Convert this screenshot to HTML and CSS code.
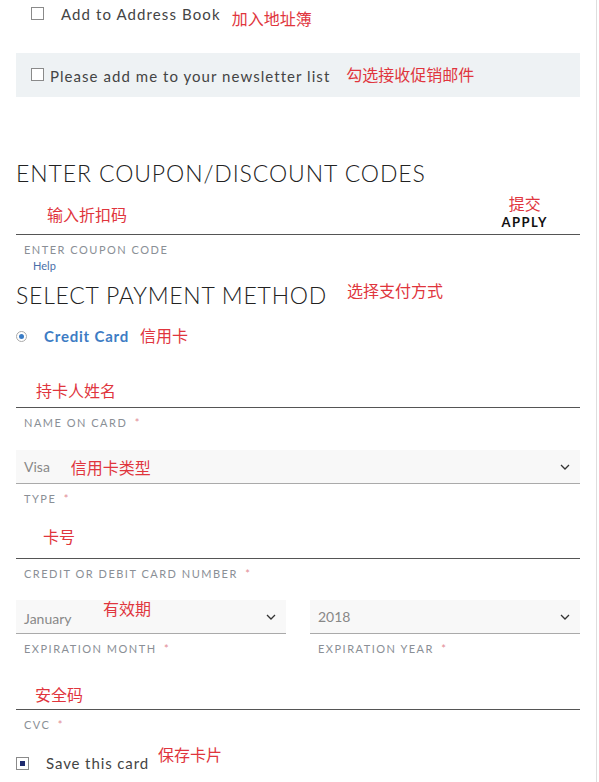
FILE: index.html
```html
<!DOCTYPE html>
<html lang="zh">
<head>
<meta charset="utf-8">
<link rel="stylesheet" href="styles.css">
</head>
<body>
<div class="page">
  <div class="row-address">
    <span class="cb"></span>
    <span class="cb-label">Add to Address Book</span>
    <span class="note note-address">加入地址簿</span>
  </div>

  <div class="newsletter">
    <span class="cb"></span>
    <span class="nl-label">Please add me to your newsletter list</span>
    <span class="note note-nl">勾选接收促销邮件</span>
  </div>

  <h2 class="heading h-coupon">ENTER COUPON/DISCOUNT CODES</h2>

  <div class="coupon-field">
    <span class="note note-coupon">输入折扣码</span>
    <div class="apply">
      <span class="note note-apply">提交</span>
      <span class="apply-btn">APPLY</span>
    </div>
  </div>
  <div class="label lbl-coupon">ENTER COUPON CODE</div>
  <div class="help">Help</div>

  <div class="pay-head">
    <h2 class="heading h-pay">SELECT PAYMENT METHOD</h2>
    <span class="note note-pay">选择支付方式</span>
  </div>

  <div class="radio-row">
    <span class="radio"><span class="dot"></span></span>
    <span class="radio-label">Credit Card</span>
    <span class="note note-cc">信用卡</span>
  </div>

  <div class="text-field f-name"><span class="note note-name">持卡人姓名</span></div>
  <div class="label">NAME ON CARD <span class="star">*</span></div>

  <div class="select f-type">
    <span class="sel-val">Visa</span>
    <span class="note note-type">信用卡类型</span>
    <svg class="chev" width="10" height="6" viewBox="0 0 10 6"><polyline points="1,1 5,5 9,1" fill="none" stroke="#333" stroke-width="1.3"/></svg>
  </div>
  <div class="label">TYPE <span class="star">*</span></div>

  <div class="text-field f-num"><span class="note note-num">卡号</span></div>
  <div class="label">CREDIT OR DEBIT CARD NUMBER <span class="star">*</span></div>

  <div class="exp">
    <div class="exp-col">
      <div class="select f-month">
        <span class="sel-val">January</span>
        <span class="note note-exp">有效期</span>
        <svg class="chev" width="10" height="6" viewBox="0 0 10 6"><polyline points="1,1 5,5 9,1" fill="none" stroke="#333" stroke-width="1.3"/></svg>
      </div>
      <div class="label">EXPIRATION MONTH <span class="star">*</span></div>
    </div>
    <div class="exp-col">
      <div class="select f-year">
        <span class="sel-val">2018</span>
        <svg class="chev" width="10" height="6" viewBox="0 0 10 6"><polyline points="1,1 5,5 9,1" fill="none" stroke="#333" stroke-width="1.3"/></svg>
      </div>
      <div class="label">EXPIRATION YEAR <span class="star">*</span></div>
    </div>
  </div>

  <div class="text-field f-cvc"><span class="note note-cvc">安全码</span></div>
  <div class="label">CVC <span class="star">*</span></div>

  <div class="save-row">
    <span class="cb cb-checked"><span class="inner"></span></span>
    <span class="save-label">Save this card</span>
    <span class="note note-save">保存卡片</span>
  </div>
</div>
</body>
</html>
```

FILE: styles.css
```css
html, body {
  margin: 0;
  padding: 0;
  background: #fff;
}
body {
  font-family: "Lato", "Open Sans", "Noto Sans CJK SC", sans-serif;
  color: #333;
}
.page {
  width: 564px;
  height: 782px;
  padding: 0 16px;
  border-right: 1px solid #dedede;
  overflow: hidden;
}
.note {
  font-family: "Noto Sans CJK SC", sans-serif;
  color: #e0353d;
  font-size: 16px;
  line-height: 18px;
  letter-spacing: 0;
}
.cb {
  display: inline-block;
  width: 11px;
  height: 11px;
  border: 1px solid #8a8a8a;
  background: #fff;
  flex: none;
}
.row-address {
  display: flex;
  align-items: flex-start;
  padding: 7px 0 0 15px;
  height: 46px;
}
.cb-label {
  margin-left: 17px;
  font-size: 15px;
  line-height: 15px;
  letter-spacing: 1.1px;
  color: #444;
}
.note-address {
  margin-left: 11px;
  margin-top: 2px;
}
.newsletter {
  display: flex;
  align-items: center;
  height: 44px;
  background: #eef2f4;
  padding-left: 15px;
}
.newsletter .cb { margin-top: -2px; }
.nl-label {
  margin-left: 6px;
  font-size: 15px;
  letter-spacing: 1.05px;
  color: #444;
  margin-top: 2px;
}
.note-nl {
  margin-left: 16px;
  margin-top: -3px;
}
.heading {
  margin: 0;
  font-weight: 300;
  color: #222;
}
.h-coupon {
  margin-top: 62px;
  font-size: 23px;
  line-height: 28px;
  letter-spacing: 0.9px;
}
.coupon-field {
  display: flex;
  justify-content: space-between;
  align-items: flex-start;
  height: 45px;
  border-bottom: 1px solid #555;
  margin-top: 2px;
}
.note-coupon {
  margin-left: 31px;
  margin-top: 16px;
}
.apply {
  display: flex;
  flex-direction: column;
  align-items: center;
  margin-right: 32px;
  margin-top: 5px;
}
.apply-btn {
  font-size: 13px;
  font-weight: 700;
  letter-spacing: 1.5px;
  color: #111;
  line-height: 14px;
  margin-top: 3px;
}
.label {
  font-size: 11px;
  letter-spacing: 1.5px;
  color: #8a8f96;
  padding-left: 8px;
  line-height: 13px;
  margin-top: 8px;
}
.star { color: #e28b94; margin-left: 3px; }
.help {
  padding-left: 17px;
  font-size: 11px;
  color: #4a6fa8;
  line-height: 12px;
  margin-top: 4px;
}
.pay-head {
  display: flex;
  align-items: flex-start;
  margin-top: 10px;
}
.h-pay {
  font-size: 23px;
  line-height: 26px;
  letter-spacing: 0.75px;
}
.note-pay {
  margin-left: 20px;
  margin-top: -1px;
}
.radio-row {
  display: flex;
  align-items: center;
  margin-top: 19px;
  height: 18px;
}
.radio {
  width: 11px;
  height: 11px;
  border: 1px solid #aaa;
  border-radius: 50%;
  box-sizing: border-box;
  display: flex;
  align-items: center;
  justify-content: center;
  background: #fff;
}
.dot {
  width: 5px;
  height: 5px;
  border-radius: 50%;
  background: #3a7cc6;
}
.radio-label {
  margin-left: 17px;
  font-size: 15px;
  font-weight: 700;
  color: #3d7cc4;
  letter-spacing: 0.8px;
}
.note-cc {
  margin-left: 11px;
  margin-top: -3px;
}
.text-field {
  border-bottom: 1px solid #555;
}
.f-name {
  margin-top: 32px;
  height: 30px;
}
.note-name { margin-left: 20px; display: inline-block; margin-top: 4px; }
.select {
  display: flex;
  align-items: center;
  height: 33px;
  background: #f8f8f8;
  border-bottom: 1px solid #aaa;
  position: relative;
}
.sel-val {
  padding-left: 8px;
  font-size: 14px;
  color: #888;
}
.chev {
  margin-left: auto;
  margin-right: 10px;
}
.f-type { margin-top: 21px; }
.note-type { margin-left: 21px; }
.f-num {
  margin-top: 22px;
  height: 31px;
}
.note-num { margin-left: 27px; display: inline-block; margin-top: 0; }
.exp {
  display: flex;
  gap: 24px;
  margin-top: 20px;
}
.exp-col { flex: 1; }
.f-month .note-exp {
  position: absolute;
  left: 87px;
  top: -1px;
}
.f-month .sel-val { margin-top: 3px; }
.f-cvc {
  margin-top: 26px;
  height: 28px;
}
.note-cvc { margin-left: 19px; display: inline-block; margin-top: 4px; }
.save-row {
  display: flex;
  align-items: flex-start;
  margin-top: 14px;
  height: 30px;
}
.cb-checked {
  display: flex;
  align-items: center;
  justify-content: center;
  margin-top: 12px;
}
.cb-checked .inner {
  width: 5px;
  height: 5px;
  background: #1e2a6e;
}
.save-label {
  margin-left: 17px;
  margin-top: 9px;
  font-size: 15px;
  line-height: 18px;
  letter-spacing: 0.9px;
  color: #444;
}
.note-save {
  margin-left: 9px;
  margin-top: 0;
}
```
